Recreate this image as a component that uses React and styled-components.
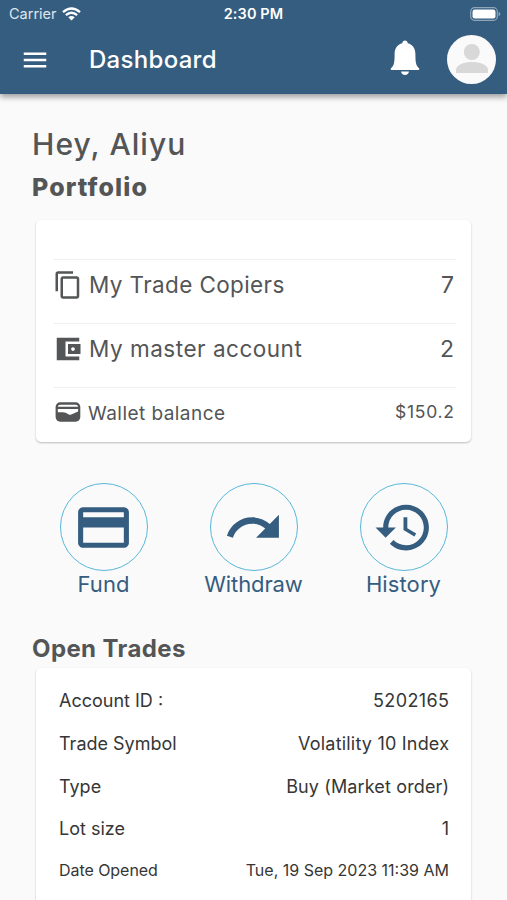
import React from 'react';
import styled, { createGlobalStyle } from 'styled-components';

const GlobalStyle = createGlobalStyle`
* {
  box-sizing: border-box;
}
body {
  margin: 0;
  background: #fafafa;
  font-family: Inter, 'Liberation Sans', sans-serif;
  overflow: hidden;
}
`;

const Screen = styled.div`
width: 507px;
height: 900px;
overflow: hidden;
background: #fafafa;
`;

const Header = styled.header`
height: 94px;
background: #355d80;
color: #fff;
box-shadow: 0 3px 6px rgba(0, 0, 0, 0.38);
`;

const StatusBar = styled.div`
display: grid;
grid-template-columns: 1fr auto 1fr;
align-items: center;
height: 27px;
padding: 0 6px;
`;

const Carrier = styled.div`
display: flex;
align-items: center;
gap: 5px;
margin-left: 3px;
color: #dfe7ee;
`;

const Battery = styled.div`
display: flex;
justify-content: flex-end;
`;

const Toolbar = styled.div`
display: flex;
align-items: center;
height: 65px;
padding: 0 11px 0 20px;
`;

const BellSlot = styled.div`
display: flex;
margin-left: auto;
margin-right: 27px;
margin-top: -4px;
`;

const Avatar = styled.div`
display: flex;
width: 49px;
height: 49px;
border-radius: 50%;
background: #fafafa;
overflow: hidden;
`;

const Text = styled.span`
white-space: nowrap;
font-size: ${({ $size }) => $size}px;
font-weight: ${({ $weight }) => $weight || 400};
letter-spacing: ${({ $spacing }) => $spacing || 0}px;
line-height: ${({ $line }) => $line || 20}px;
`;

const Title = styled(Text)`
margin-left: 39px;
`;

const Content = styled.main`
display: flex;
flex-direction: column;
padding: 32px 36px 0;
color: #535556;
`;

const Heading = styled(Text)`
margin: ${({ $top }) => $top || 0}px 0 0 -4px;
`;

const Card = styled.section`
background: #fff;
border-radius: 5px;
box-shadow: 0 1px 2px rgba(0, 0, 0, 0.25);
`;

const Portfolio = styled(Card)`
height: 222px;
margin-top: 9px;
padding: 39px 15px 0 17px;
`;

const PortfolioRow = styled.div`
display: flex;
align-items: center;
height: 64px;
padding: 0 2px 13px 0;
border-top: 1px solid #f1f1f1;
`;

const BalanceRow = styled(PortfolioRow)`
height: 63px;
padding-bottom: 15px;
`;

const Value = styled(Text)`
margin-left: auto;
margin-right: ${({ $spacing }) => -($spacing || 0)}px;
`;

const PortfolioLabel = styled(Text)`
margin-left: 6px;
`;

const BalanceLabel = styled(Text)`
margin-left: 5px;
padding-top: 5px;
`;

const Actions = styled.nav`
display: grid;
grid-template-columns: repeat(3, 150px);
justify-content: center;
margin-top: 41px;
color: #355d80;
`;

const Action = styled.div`
display: flex;
flex-direction: column;
align-items: center;
`;

const Ring = styled.div`
display: flex;
align-items: center;
justify-content: center;
width: 88px;
height: 88px;
border: 1.4px solid #58b7da;
border-radius: 50%;
`;

const Trades = styled(Card)`
height: 260px;
margin-top: 4px;
padding: 12px 22px 0 23px;
color: #363636;
`;

const TradeRow = styled.div`
display: flex;
align-items: center;
height: 42.7px;
`;

const TradeDateRow = styled(TradeRow)`
height: 39px;
`;

const actions = [
  { label: 'Fund', icon: <FundIcon />, spacing: 0.1 },
  { label: 'Withdraw', icon: <WithdrawIcon />, spacing: -0.1 },
  { label: 'History', icon: <HistoryIcon />, spacing: 0.1 },
];

const trades = [
  { label: 'Account ID :', value: '5202165', spacing: 0.4 },
  { label: 'Trade Symbol', value: 'Volatility 10 Index', spacing: 0.2 },
  { label: 'Type', value: 'Buy (Market order)', spacing: 0.13 },
  { label: 'Lot size', value: '1', spacing: 0 },
];

function Icon({ size, children }) {
  return (
    <svg width={size} height={size} viewBox="0 0 24 24" fill="currentColor">
      {children}
    </svg>
  );
}

function FundIcon() {
  return (
    <Icon size={61}>
      <path d="M20 4H4c-1.11 0-1.99.89-1.99 2L2 18c0 1.11.89 2 2 2h16c1.11 0 2-.89 2-2V6c0-1.11-.89-2-2-2zm0 14H4v-6h16v6zm0-10H4V6h16v2z" />
    </Icon>
  );
}

function WithdrawIcon() {
  return (
    <Icon size={61}>
      <path d="M18.4 10.6C16.55 8.99 14.15 8 11.5 8c-4.65 0-8.58 3.03-9.96 7.22L3.9 16c1.05-3.19 4.05-5.5 7.6-5.5 1.95 0 3.73.72 5.12 1.88L13 16h9V7l-3.6 3.6z" />
    </Icon>
  );
}

function HistoryIcon() {
  return (
    <Icon size={61}>
      <path d="M13 3c-4.97 0-9 4.03-9 9H1l3.89 3.89.07.14L9 12H6c0-3.87 3.13-7 7-7s7 3.13 7 7-3.13 7-7 7c-1.93 0-3.68-.79-4.94-2.06l-1.42 1.42C8.27 19.99 10.51 21 13 21c4.97 0 9-4.03 9-9s-4.03-9-9-9zm-1 5v5l4.28 2.54.72-1.21-3.5-2.08V8H12z" />
    </Icon>
  );
}

function WifiIcon() {
  return (
    <svg width="19" height="14" viewBox="0 0 19 14" fill="none" stroke="#fff" strokeWidth="2.4">
      <path d="M1 5.2Q9.5-2.2 18 5.2" />
      <path d="M3.9 8.2Q9.5 3.3 15.1 8.2" />
      <path d="M6.3 10.3Q9.5 7.6 12.7 10.3L9.5 13.6Z" fill="#fff" stroke="none" />
    </svg>
  );
}

function BatteryIcon() {
  return (
    <svg width="31" height="14" viewBox="0 0 31 14">
      <rect x="0.7" y="0.7" width="26.6" height="12.6" rx="3.8" fill="none" stroke="#8fa6b9" strokeWidth="1.2" />
      <rect x="2.5" y="2.5" width="23" height="9" rx="2.2" fill="#fff" />
      <path d="M28.6 4.8q1.8.8 1.8 2.2t-1.8 2.2z" fill="#8fa6b9" />
    </svg>
  );
}

function BellIcon() {
  return (
    <svg width="30" height="36" viewBox="0 0 30 36" fill="#fff">
      <path d="M15 .5c-1.500 0-2.600 1.100-2.700 2.700C7.300 4.400 4.600 8.500 4.600 14c0 8.500-.6 11.500-3.400 14-.8.8-.9 2 .6 2h26.400c1.500 0 1.400-1.200.6-2-2.800-2.500-3.400-5.500-3.400-14 0-5.500-2.700-9.600-7.700-10.800C17.600 1.600 16.500.5 15 .5z" />
      <path d="M11 31.500h8c-.4 2.100-2 3.500-4 3.500s-3.600-1.400-4-3.500z" />
    </svg>
  );
}

function WalletIcon() {
  return (
    <svg width="30" height="20" viewBox="0 0 30 20">
      <rect x="2.600" y="0.300" width="24.700" height="19.400" rx="4.600" fill="currentColor" />
      <path d="M4.800 4.700Q5 2.700 7.200 2.700H22.700Q24.900 2.700 25.100 4.700Z" fill="#fff" />
      <path d="M4.800 6.900H25.100V9.600L18.300 12.600Q17 13 15.800 12.500L12.600 10.800Q11.500 10.300 10 10.200H4.800Z" fill="#fff" />
    </svg>
  );
}

export default function App() {
  return (
    <Screen>
      <GlobalStyle />
      <Header>
        <StatusBar>
          <Carrier>
            <Text $size={14.5} $spacing={0}>Carrier</Text>
            <WifiIcon />
          </Carrier>
          <Text $size={14.5} $weight={600} $spacing={0.1}>2:30 PM</Text>
          <Battery><BatteryIcon /></Battery>
        </StatusBar>
        <Toolbar>
          <Icon size={30}>
            <path d="M3 18h18v-2H3v2zm0-5h18v-2H3v2zm0-7v2h18V6H3z" />
          </Icon>
          <Title $size={24} $spacing={0.3} $weight={500}>Dashboard</Title>
          <BellSlot><BellIcon /></BellSlot>
          <Avatar>
            <svg width="49" height="49" viewBox="0 0 49 49" fill="#d8d8d8">
              <circle cx="24.800" cy="17" r="8" />
              <path d="M9 38v-3c0-5.500 8.500-8 16-8s16 2.500 16 8v3z" />
            </svg>
          </Avatar>
        </Toolbar>
      </Header>
      <Content>
        <Heading as="h1" $size={30} $line={37} $spacing={1.05} $weight={500}>Hey, Aliyu</Heading>
        <Heading as="h2" $size={25} $line={48} $spacing={1.1} $weight={800}>Portfolio</Heading>
        <Portfolio>
          <PortfolioRow>
            <Icon size={30}>
              <path d="M16 1H4c-1.100 0-2 .9-2 2v14h2V3h12V1zm3 4H8c-1.100 0-2 .9-2 2v14c0 1.100.9 2 2 2h11c1.100 0 2-.9 2-2V7c0-1.100-.9-2-2-2zm0 16H8V7h11v14z" />
            </Icon>
            <PortfolioLabel $size={22.5} $spacing={0.38}>My Trade Copiers</PortfolioLabel>
            <Value $size={23}>7</Value>
          </PortfolioRow>
          <PortfolioRow>
            <Icon size={30}>
              <path d="M21 18v3H3V3h18v3H10v12h11zm-9-2h10V8H12v8zm4-2.500c-.83 0-1.500-.67-1.500-1.500s.67-1.500 1.500-1.500 1.500.67 1.500 1.500-.67 1.500-1.500 1.500z" />
            </Icon>
            <PortfolioLabel $size={22.5} $spacing={0.52}>My master account</PortfolioLabel>
            <Value $size={23}>2</Value>
          </PortfolioRow>
          <BalanceRow>
            <WalletIcon />
            <BalanceLabel $size={19} $spacing={0.45}>Wallet balance</BalanceLabel>
            <Value $size={17.5} $spacing={0.75}>$150.2</Value>
          </BalanceRow>
        </Portfolio>
        <Actions>
          {actions.map(({ label, icon, spacing }) => (
            <Action key={label}>
              <Ring>{icon}</Ring>
              <Text $size={22} $line={27} $spacing={spacing}>{label}</Text>
            </Action>
          ))}
        </Actions>
        <Heading as="h2" $top={36} $size={24} $line={30} $spacing={0.4} $weight={700}>Open Trades</Heading>
        <Trades>
          {trades.map(({ label, value, spacing }) => (
            <TradeRow key={label}>
              <Text $size={18}>{label}</Text>
              <Value $size={18} $spacing={spacing}>{value}</Value>
            </TradeRow>
          ))}
          <TradeDateRow>
            <Text $size={16} $spacing={-0.05}>Date Opened</Text>
            <Value $size={16}>Tue, 19 Sep 2023 11:39 AM</Value>
          </TradeDateRow>
        </Trades>
      </Content>
    </Screen>
  );
}
